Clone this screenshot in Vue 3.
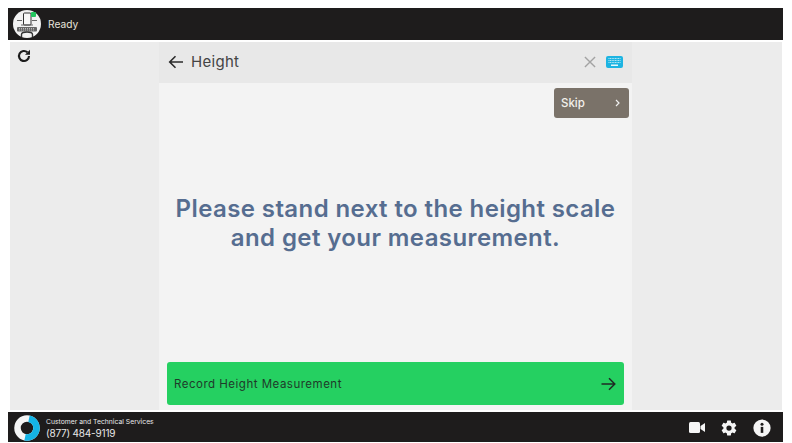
<template>
  <div class="screen">
    <header class="topbar">
      <div class="logo">
        <svg width="28" height="28" viewBox="0 0 28 28">
          <circle cx="14" cy="14" r="14" fill="#f2f2f2" />
          <rect x="10.500" y="3" width="7.500" height="12" rx="1" fill="#f8f8f8" stroke="#333" stroke-width="1" />
          <path d="M4 10.500h5M19 10.500h5M8 15h12" stroke="#555" stroke-width="0.900" />
          <rect x="4" y="17" width="20" height="4.500" rx="1" fill="#666" />
          <path d="M6 18.500h16M6 20h16" stroke="#ddd" stroke-width="0.700" stroke-dasharray="1 1" />
          <path d="M8.500 27v-2.500c0-1.500 2.500-2.500 5.500-2.500s5.500 1 5.500 2.500V27" fill="none" stroke="#333" stroke-width="1.400" />
          <rect x="18" y="2" width="5" height="5" rx="1" fill="#22c55e" />
        </svg>
      </div>
      <span class="status">Ready</span>
    </header>

    <main class="content">
      <aside class="side side-left">
        <svg class="reload" width="16" height="16" viewBox="0 0 24 24">
          <path d="M19.500 12a7.500 7.500 0 1 1-2.400-5.500" fill="none" stroke="#1c1c1c" stroke-width="3.200" />
          <path d="M21 2.500v7.500h-7.500z" fill="#1c1c1c" />
        </svg>
      </aside>

      <section class="panel">
        <div class="panel-head">
          <svg width="16" height="14" viewBox="0 0 16 14" class="back">
            <path d="M15 7H2M7.500 1.200 1.700 7l5.800 5.800" fill="none" stroke="#2b2b2b" stroke-width="1.600" />
          </svg>
          <span class="title">Height</span>
          <svg width="12" height="12" viewBox="0 0 13 13" class="close">
            <path d="M1 1l11 11M12 1 1 12" stroke="#a3a3a3" stroke-width="1.500" />
          </svg>
          <svg width="17" height="12" viewBox="0 0 17 12" class="keyboard">
            <rect width="17" height="12" rx="2" fill="#1db4e2" />
            <path d="M2.500 2.500h12M2.500 4.500h12M2.500 6.500h12" stroke="#bfeaf7" stroke-width="1.100" stroke-dasharray="1 .6" />
            <rect x="5" y="8.500" width="7" height="1.500" fill="#e6f8fd" />
          </svg>
        </div>

        <div class="panel-body">
          <div class="skip-row">
            <button class="skip">
              <span>Skip</span>
              <svg width="5" height="8" viewBox="0 0 5 8">
                <path d="M1 1l3 3-3 3" fill="none" stroke="#f0f0f0" stroke-width="1.200" />
              </svg>
            </button>
          </div>

          <h1 class="message">Please stand next to the height scale<br />and get your measurement.</h1>

          <button class="record">
            <span>Record Height Measurement</span>
            <svg width="15" height="14" viewBox="0 0 15 14">
              <path d="M0.500 7h13M8 1.200 13.800 7 8 12.800" fill="none" stroke="#1f2a24" stroke-width="1.500" />
            </svg>
          </button>
        </div>
      </section>

      <aside class="side"></aside>
    </main>

    <footer class="footer">
      <div class="brand">
        <svg width="26" height="26" viewBox="0 0 26 26">
          <circle cx="13" cy="13" r="9.500" fill="none" stroke="#f5f5f5" stroke-width="6.500" />
          <path d="M13 3.500a9.500 9.500 0 0 1 0 19" fill="none" stroke="#14b4e6" stroke-width="6.500" transform="rotate(12 13 13)" />
        </svg>
        <div class="support">
          <span class="support-label">Customer and Technical Services</span>
          <span class="support-phone">(877) 484-9119</span>
        </div>
      </div>
      <div class="tools">
        <svg width="16" height="11" viewBox="0 0 16 11">
          <rect width="11" height="11" rx="1.500" fill="#f5f5f5" />
          <path d="M11.500 4 16 1v9l-4.500-3z" fill="#f5f5f5" />
        </svg>
        <svg width="18" height="18" viewBox="0 0 24 24">
          <path fill="#f5f5f5" d="M19.430 12.980c.04-.32.070-.64.070-.98s-.030-.66-.070-.98l2.110-1.650a.5.5 0 0 0 .12-.64l-2-3.460a.5.5 0 0 0-.61-.22l-2.490 1a7.300 7.300 0 0 0-1.690-.98l-.38-2.650A.49.490 0 0 0 14 2h-4a.49.490 0 0 0-.49.420l-.38 2.650c-.61.250-1.170.590-1.690.98l-2.490-1a.49.490 0 0 0-.61.220l-2 3.460a.49.490 0 0 0 .12.640l2.110 1.650c-.04.320-.07.650-.07.980s.030.660.070.980l-2.110 1.650a.5.5 0 0 0-.12.640l2 3.460c.12.220.39.300.61.220l2.490-1c.52.400 1.080.730 1.690.98l.38 2.650c.030.240.24.420.49.420h4c.25 0 .46-.18.49-.42l.38-2.650c.61-.25 1.170-.59 1.690-.98l2.490 1c.23.090.49 0 .61-.22l2-3.460a.5.5 0 0 0-.12-.64zM12 15.500a3.500 3.500 0 1 1 0-7 3.500 3.500 0 0 1 0 7z" />
        </svg>
        <svg width="18" height="18" viewBox="0 0 24 24">
          <circle cx="12" cy="12" r="11.500" fill="#f5f5f5" />
          <rect x="10.300" y="10.500" width="3.400" height="8" fill="#1e1c1c" />
          <circle cx="12" cy="7" r="2" fill="#1e1c1c" />
        </svg>
      </div>
    </footer>
  </div>
</template>

<script setup>
</script>

<style>
html,
body {
  margin: 0;
  background: #fff;
}
</style>

<style scoped>
.screen {
  width: 775px;
  height: 434px;
  margin: 8px 9px 0 8px;
  display: flex;
  flex-direction: column;
  font-family: "Inter", "Open Sans", sans-serif;
}

.topbar {
  height: 32px;
  flex: none;
  background: #1e1c1c;
  display: flex;
  align-items: center;
  padding-left: 5px;
  gap: 7px;
}

.logo {
  width: 28px;
  height: 28px;
}

.status {
  color: #e8e4dc;
  font-size: 10.200px;
}

.content {
  flex: 1;
  display: flex;
  margin: 2px 1px 2px 2px;
  min-height: 0;
}

.side {
  flex: 1;
  background: #ececec;
}

.side-left {
  flex: none;
  width: 149px;
  padding: 6px 0 0 6px;
  box-sizing: border-box;
}

.reload {
  display: block;
}

.panel {
  width: 473px;
  flex: none;
  display: flex;
  flex-direction: column;
  background: #f3f3f3;
}

.panel-head {
  height: 41px;
  box-sizing: border-box;
  flex: none;
  background: #e8e8e8;
  display: flex;
  align-items: center;
  padding: 0 9px 2px 9px;
}

.back {
  margin-right: 7px;
}

.title {
  color: #444;
  font-size: 15px;
  letter-spacing: 0.3px;
  flex: 1;
}

.close {
  margin-right: 10px;
}

.panel-body {
  flex: 1;
  display: flex;
  flex-direction: column;
  padding: 5px 8px 5px;
  min-height: 0;
}

.skip-row {
  display: flex;
  justify-content: flex-end;
  margin-right: -5px;
}

.skip {
  width: 75px;
  height: 30px;
  border: none;
  border-radius: 3px;
  background: #7a7269;
  color: #f2f0ec;
  font: 500 11.500px "Inter", sans-serif;
  display: flex;
  align-items: center;
  justify-content: space-between;
  padding: 0 9px 0 7px;
}

.message {
  margin: 76px 0 0;
  text-align: center;
  color: #566d90;
  font-size: 24px;
  line-height: 29px;
  font-weight: 600;
  letter-spacing: 0.4px;
  white-space: nowrap;
}

.record {
  margin-top: auto;
  height: 43px;
  border: none;
  border-radius: 3px;
  background: #25d061;
  color: #1f3a2a;
  font: 400 11.500px "Inter", sans-serif;
  letter-spacing: 0.5px;
  display: flex;
  align-items: center;
  justify-content: space-between;
  padding: 0 8px 0 7px;
}

.footer {
  height: 30px;
  flex: none;
  background: #1e1c1c;
  display: flex;
  align-items: center;
  justify-content: space-between;
  padding: 1px 12px 0 6px;
  box-sizing: border-box;
}

.brand {
  display: flex;
  align-items: center;
  gap: 6px;
}

.support {
  display: flex;
  flex-direction: column;
  color: #e8e8e8;
}

.support-label {
  font-size: 6.800px;
  line-height: 10px;
}

.support-phone {
  font-size: 10px;
  line-height: 12px;
  letter-spacing: -0.2px;
}

.tools {
  display: flex;
  align-items: center;
  gap: 15px;
}

.tools svg {
  display: block;
}
</style>
